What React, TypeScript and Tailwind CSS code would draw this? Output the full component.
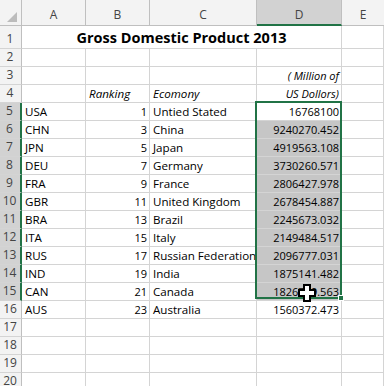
import React from "react";

const rows = [
  ["USA", "1", "Untied Stated", "16768100"],
  ["CHN", "3", "China", "9240270.452"],
  ["JPN", "5", "Japan", "4919563.108"],
  ["DEU", "7", "Germany", "3730260.571"],
  ["FRA", "9", "France", "2806427.978"],
  ["GBR", "11", "United Kingdom", "2678454.887"],
  ["BRA", "13", "Brazil", "2245673.032"],
  ["ITA", "15", "Italy", "2149484.517"],
  ["RUS", "17", "Russian Federation", "2096777.031"],
  ["IND", "19", "India", "1875141.482"],
  ["CAN", "21", "Canada", "1826769.563"],
  ["AUS", "23", "Australia", "1560372.473"],
];

const font = { fontFamily: '"Open Sans", "Noto Sans", sans-serif' };

function RowHead({ n, sel }: { n: number; sel?: boolean }) {
  return (
    <div
      className={
        "flex items-end justify-center pb-[2px] pr-[1px] text-[12px] leading-[14px] text-[#444] border-b border-[#d4d4d4] " +
        (sel ? "bg-[#d2d2d2] border-r-2 border-r-[#217346]" : "bg-[#f3f3f3] border-r border-r-[#bfbfbf]")
      }
    >
      {n}
    </div>
  );
}

function Cell({
  children,
  right,
  italic,
  fill,
}: {
  children?: React.ReactNode;
  right?: boolean;
  italic?: boolean;
  fill?: boolean;
}) {
  return (
    <div
      className={
        "flex items-end overflow-hidden whitespace-nowrap pb-[1px] leading-[14px] text-black border-r border-b border-[#d4d4d4] " +
        (right ? "justify-end pr-[2px] text-[11px] " : "pl-[3px] text-[11.6px] ") +
        (italic ? "italic " : "") +
        (fill ? "bg-[#c6c6c6]" : "bg-white")
      }
    >
      {children}
    </div>
  );
}

export default function App() {
  return (
    <div className="relative w-[384px] h-[386px] overflow-hidden bg-white" style={font}>
      <div className="grid grid-cols-[22px_64px_64px_107px_85px_1fr] grid-rows-[26px_23px_repeat(19,18px)]">
        {/* column headers */}
        <div className="relative bg-[#f3f3f3] border-r border-b border-[#bfbfbf]">
          <div className="absolute right-[4px] bottom-[3px] w-0 h-0 border-l-[10px] border-l-transparent border-b-[10px] border-b-[#bcbcbc]" />
        </div>
        {["A", "B", "C"].map((c) => (
          <div
            key={c}
            className="flex items-end justify-center pb-[3px] text-[12px] leading-[14px] text-[#444] bg-[#f3f3f3] border-r border-b border-[#bfbfbf]"
          >
            {c}
          </div>
        ))}
        <div className="flex items-end justify-center pb-[2px] text-[12px] leading-[14px] text-[#444] bg-[#d2d2d2] border-r border-r-[#bfbfbf] border-b-2 border-b-[#217346]">
          D
        </div>
        <div className="flex items-end justify-center pb-[3px] text-[12px] leading-[14px] text-[#444] bg-[#f3f3f3] border-b border-[#bfbfbf]">
          E
        </div>

        {/* row 1 title */}
        <RowHead n={1} />
        <div className="col-span-4 flex items-center justify-center pt-[1px] text-[14.5px] font-bold text-black border-r border-b border-[#d4d4d4]">
          Gross Domestic Product 2013
        </div>
        <Cell />

        {/* row 2 */}
        <RowHead n={2} />
        <Cell />
        <Cell />
        <Cell />
        <Cell />
        <Cell />

        {/* row 3 */}
        <RowHead n={3} />
        <Cell />
        <Cell />
        <Cell />
        <Cell right italic>
          ( Million of
        </Cell>
        <Cell />

        {/* row 4 */}
        <RowHead n={4} />
        <Cell />
        <Cell italic>Ranking</Cell>
        <Cell italic>Ecomony</Cell>
        <Cell right italic>
          US Dollors)
        </Cell>
        <Cell />

        {rows.map((r, i) => {
          const n = i + 5;
          const sel = n <= 15;
          return (
            <React.Fragment key={n}>
              <RowHead n={n} sel={sel} />
              <Cell>{r[0]}</Cell>
              <Cell right>{r[1]}</Cell>
              <Cell>{r[2]}</Cell>
              <Cell right fill={sel && n > 5}>
                {r[3]}
              </Cell>
              <Cell />
            </React.Fragment>
          );
        })}

        {[17, 18, 19, 20].map((n) => (
          <React.Fragment key={n}>
            <RowHead n={n} />
            <Cell />
            <Cell />
            <Cell />
            <Cell />
            <Cell />
          </React.Fragment>
        ))}
      </div>

      {/* selection border D5:D15 */}
      <div className="absolute left-[255px] top-[101px] w-[87px] h-[198px] border-2 border-[#217346]" />
      <div className="absolute left-[338px] top-[295px] w-[6px] h-[6px] bg-[#217346] border border-white" />

      {/* cell cursor */}
      <svg className="absolute left-[298px] top-[284px]" width="18" height="18" viewBox="0 0 18 18">
        <path
          d="M6 1h6v5h5v6h-5v5H6v-5H1V6h5z"
          fill="white"
          stroke="black"
          strokeWidth="2"
        />
      </svg>
    </div>
  );
}
